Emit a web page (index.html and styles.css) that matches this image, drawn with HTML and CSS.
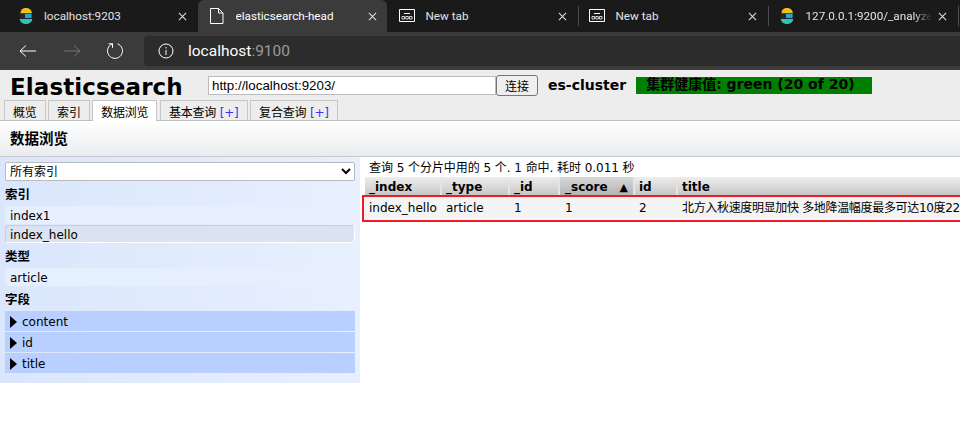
FILE: index.html
```html
<!DOCTYPE html>
<html lang="zh">
<head>
<meta charset="utf-8">
<title>elasticsearch-head</title>
<link rel="stylesheet" href="styles.css">
</head>
<body>
<div class="tabbar">
  <div class="tab t1">
    <svg class="ico" viewBox="0 0 16 16"><path d="M2.500 5.500C2.500 1.500 5 0 8 0S13.500 1.500 14 5.500Z" fill="#f0bf1a"/><path d="M1.500 5.500H14.500V11H1.500Z" fill="#262626"/><path d="M7 6H13.500V10H7Z" fill="#1ba9e1"/><path d="M1.800 11H14.200C14 14.500 11 16 8 16S2 14.500 1.800 11Z" fill="#2ec4b6"/></svg>
    <span class="tabt">localhost:9203</span><svg class="x" viewBox="0 0 10 10"><path d="M1 1L9 9M9 1L1 9"/></svg>
  </div>
  <div class="tab active t2">
    <svg class="ico" viewBox="0 0 16 16"><path d="M1.500 .5H9.500L14 5V15.500H1.500ZM9.500 .5V5H14" fill="none" stroke="#fff"/></svg>
    <span class="tabt">elasticsearch-head</span><svg class="x" viewBox="0 0 10 10"><path d="M1 1L9 9M9 1L1 9"/></svg>
  </div>
  <div class="tab t3">
    <svg class="ico" viewBox="0 0 16 16"><path d="M.5 1.500H15.500V13.500H.5ZM5 5.500H11" fill="none" stroke="#fff"/><path d="M3 8.500h2.500v2.500H3ZM6.800 8.500h2.500v2.500H6.800ZM10.500 8.500h2.500v2.500h-2.500Z" fill="none" stroke="#fff" stroke-width=".8"/></svg>
    <span class="tabt">New tab</span><svg class="x" viewBox="0 0 10 10"><path d="M1 1L9 9M9 1L1 9"/></svg>
  </div>
  <div class="sep"></div>
  <div class="tab t3">
    <svg class="ico" viewBox="0 0 16 16"><path d="M.5 1.500H15.500V13.500H.5ZM5 5.500H11" fill="none" stroke="#fff"/><path d="M3 8.500h2.500v2.500H3ZM6.800 8.500h2.500v2.500H6.800ZM10.500 8.500h2.500v2.500h-2.500Z" fill="none" stroke="#fff" stroke-width=".8"/></svg>
    <span class="tabt">New tab</span><svg class="x" viewBox="0 0 10 10"><path d="M1 1L9 9M9 1L1 9"/></svg>
  </div>
  <div class="sep"></div>
  <div class="tab t3">
    <svg class="ico" viewBox="0 0 16 16"><path d="M2.500 5.500C2.500 1.500 5 0 8 0S13.500 1.500 14 5.500Z" fill="#f0bf1a"/><path d="M1.500 5.500H14.500V11H1.500Z" fill="#262626"/><path d="M7 6H13.500V10H7Z" fill="#1ba9e1"/><path d="M1.800 11H14.200C14 14.500 11 16 8 16S2 14.500 1.800 11Z" fill="#2ec4b6"/></svg>
    <span class="tabt fade">127.0.0.1:9200/_analyze</span><svg class="x" viewBox="0 0 10 10"><path d="M1 1L9 9M9 1L1 9"/></svg>
  </div>
  <div class="sep"></div>
</div>
<div class="toolbar">
  <svg class="nav" viewBox="0 0 18 18"><path d="M1 9H17M1 9L7 3.500M1 9L7 14.500" fill="none" stroke="#fff" stroke-width="1"/></svg>
  <svg class="nav" viewBox="0 0 18 18"><path d="M17 9H1M17 9L11 3.500M17 9L11 14.500" fill="none" stroke="#777" stroke-width="1"/></svg>
  <svg class="nav" viewBox="0 0 18 18"><path d="M6.500 1.800A7.500 7.500 0 1 0 11.500 1.800M6.500 1.800V5.800M6.500 1.800H2.500" fill="none" stroke="#fff" stroke-width="1"/></svg>
  <div class="omni">
    <svg class="info" viewBox="0 0 16 16"><circle cx="8" cy="8" r="7" fill="none" stroke="#fff"/><path d="M8 7V12M8 4V5.500" stroke="#fff"/></svg>
    <span class="url">localhost<span class="port">:9100</span></span>
  </div>
</div>
<div class="page">
  <div class="head">
    <h1 class="brand">Elasticsearch</h1>
    <input class="addr" type="text" value="http://localhost:9203/">
    <button class="conn">连接</button>
    <span class="cname">es-cluster</span>
    <span class="health">集群健康值: green (20 of 20)</span>
  </div>
  <div class="tabs">
    <span class="pt">概览</span>
    <span class="pt">索引</span>
    <span class="pt on">数据浏览</span>
    <span class="pt">基本查询 <b>[+]</b></span>
    <span class="pt">复合查询 <b>[+]</b></span>
  </div>
  <div class="title">数据浏览</div>
  <div class="main">
    <aside class="side">
      <select class="sel"><option>所有索引</option></select>
      <h3 class="sh">索引</h3>
      <div class="fi">index1</div>
      <div class="fi cur">index_hello</div>
      <h3 class="sh">类型</h3>
      <div class="fi">article</div>
      <h3 class="sh">字段</h3>
      <div class="fld"><i class="tri"></i>content</div>
      <div class="fld"><i class="tri"></i>id</div>
      <div class="fld"><i class="tri"></i>title</div>
    </aside>
    <section class="res">
      <div class="sum">查询 5 个分片中用的 5 个. 1 命中. 耗时 0.011 秒</div>
      <div class="thead">
        <span class="c c1">_index</span><span class="c c2">_type</span><span class="c c3">_id</span><span class="c c4 sorted">_score<em>▲</em></span><span class="c c5">id</span><span class="c c6">title</span>
      </div>
      <div class="row">
        <span class="c c1">index_hello</span><span class="c c2">article</span><span class="c c3">1</span><span class="c c4">1</span><span class="c c5">2</span><span class="c c6">北方入秋速度明显加快 多地降温幅度最多可达10度22</span>
      </div>
    </section>
  </div>
</div>
</body>
</html>
```
FILE: styles.css
```css
html, body { margin: 0; padding: 0; height: 423px; overflow: hidden; background: #fff; }
body { width: 960px; font-family: "DejaVu Sans", "Noto Sans CJK SC", sans-serif; font-size: 12px; color: #000; }

.tabbar { height: 32px; background: #1a1a1a; display: flex; align-items: center; font-family: Roboto, "Open Sans", sans-serif; font-size: 11.700px; color: #e3e3e3; }
.tab { height: 32px; display: flex; align-items: center; box-sizing: border-box; flex: none; }
.t1 { width: 198px; padding: 0 11.500px 0 17.500px; }
.t2 { width: 189px; padding: 0 10.500px 0 11px; margin-right: 2px; }
.t3 { width: 189px; padding: 0 11.500px 0 10px; }
.tab.active { background: #3b3b3b; border-radius: 6px 6px 0 0; color: #fff; }
.ico { width: 16px; height: 16px; flex: none; }
.tabt { flex: 1; margin-left: 10.500px; white-space: nowrap; overflow: hidden; }
.fade { -webkit-mask-image: linear-gradient(to right, #000 85%, transparent); mask-image: linear-gradient(to right, #000 85%, transparent); }
.x { width: 9px; height: 9px; flex: none; margin-left: 6px; }
.x path { stroke: #ddd; stroke-width: 1.2; fill: none; }
.sep { width: 1px; height: 20px; background: #4d4d4d; flex: none; }

.toolbar { height: 38px; background: #3b3b3b; display: flex; align-items: center; box-sizing: border-box; }
.nav { width: 18px; height: 18px; flex: none; margin-left: 25.500px; }
.nav:first-child { margin-left: 19px; }
.omni { flex: 1; height: 30px; background: #2c2c2c; border-radius: 4px 0 0 4px; margin-left: 20px; display: flex; align-items: center; padding-left: 14px; }
.info { width: 16px; height: 16px; flex: none; }
.url { margin-left: 14px; font-family: Roboto, "Open Sans", sans-serif; font-size: 15.500px; color: #fff; }
.port { color: #9a9a9a; }

.page { height: 353px; background: #fff; }
.head { height: 30px; background: #ededed; display: flex; align-items: center; box-sizing: border-box; }
.brand { margin: 4px 0 0 10px; font: bold 23px "DejaVu Sans", sans-serif; letter-spacing: .1px; width: 198px; white-space: nowrap; line-height: 26px; }
.addr { width: 288px; height: 19px; box-sizing: border-box; border: 1px solid #bbb; padding: 0 3px; font: 13.333px "Liberation Sans", sans-serif; background: #fff; color: #000; }
.conn { height: 21px; width: 42px; padding: 0; font: 12px "DejaVu Sans", "Noto Sans CJK SC", sans-serif; background: #efefef; border: 1px solid #767676; border-radius: 3px; }
.cname { margin-left: 10px; font-weight: bold; font-size: 14px; }
.health { margin-left: 10px; width: 236px; height: 17px; line-height: 15px; padding-left: 10px; box-sizing: border-box; background: #008000; font-weight: bold; font-size: 14px; white-space: nowrap; overflow: hidden; }

.tabs { height: 21px; box-sizing: border-box; background: #ededed; display: flex; align-items: flex-end; gap: 2.500px; padding-left: 4px; border-bottom: 1px solid #bdbdbd; font-size: 12px; letter-spacing: -.2px; }
.pt { height: 20px; line-height: 25px; box-sizing: border-box; border: 1px solid #c6c6c6; border-bottom: 0; padding: 0 8px; white-space: nowrap; color: #000; overflow: hidden; }
.pt b { font-weight: normal; color: #33f; }
.pt.on { background: #fff; height: 21px; line-height: 25px; margin-bottom: -1px; position: relative; }

.title { height: 36px; line-height: 37px; box-sizing: border-box; padding-left: 10px; font-size: 14.500px; font-weight: bold; background: linear-gradient(#fff, #e9ecef); border-bottom: 1px solid #c9c9c9; }

.main { display: flex; align-items: flex-start; }
.side { width: 360px; height: 226px; box-sizing: border-box; padding: 5px 5px 0; background: linear-gradient(to right, #dae6fc, #e7f0fe); flex: none; }
.sel { width: 350px; height: 19px; display: block; font: 12px "DejaVu Sans", "Noto Sans CJK SC", sans-serif; padding: 0; background: #fff; border: 1px solid #bbb; border-radius: 2px; }
.sh { margin: 0; height: 25px; box-sizing: border-box; padding-top: 3px; line-height: 22px; font-size: 12.500px; font-weight: bold; }
.fi { height: 18px; line-height: 20px; padding-left: 5px; background: #e5effe; border-radius: 4px; box-sizing: border-box; }
.fi + .fi { margin-top: 1px; }
.fi.cur { background: #dae3ef; border: 1px solid #c3d0e6; border-bottom-color: #fff; border-right-color: #fff; line-height: 18px; padding-left: 4px; }
.fld { height: 20px; box-sizing: border-box; padding: 2px 0 0 5px; background: #b8cfff; margin-bottom: 1px; display: flex; align-items: center; }
.tri { width: 0; height: 0; border-left: 7px solid #000; border-top: 6px solid transparent; border-bottom: 6px solid transparent; margin-right: 5px; }

.res { flex: 1; min-width: 0; padding-top: 2px; }
.sum { height: 18px; line-height: 18px; padding-left: 9px; white-space: nowrap; letter-spacing: -.05px; }
.thead, .row { display: flex; white-space: nowrap; }
.thead { height: 18px; line-height: 21px; font-weight: bold; background: linear-gradient(#ededed, #c8c8c8); margin-left: 5px; }
.thead .c { border-right: 2px solid #e4e4e4; }
.c { display: block; box-sizing: border-box; padding-left: 4px; flex: none; overflow: hidden; }
.c1 { width: 77px; }
.c2 { width: 68px; }
.c3 { width: 50px; }
.c4 { width: 75px; position: relative; padding-left: 5px; }
.sorted { background: linear-gradient(#d8d8d8, #b4b4b4); }
.sorted em { font-style: normal; font-size: 11px; position: absolute; right: 5px; top: 0; }
.c5 { width: 43px; }
.c6 { width: 282px; }
.row .c6 { letter-spacing: -.33px; }
.thead .c6 { border-right: 0; }
.row { height: 27px; line-height: 22px; border: 2px solid #ed1c24; border-right: 0; background: #f4f4f4; margin-left: 2px; box-sizing: border-box; padding-left: 1px; color: #000; }
```
